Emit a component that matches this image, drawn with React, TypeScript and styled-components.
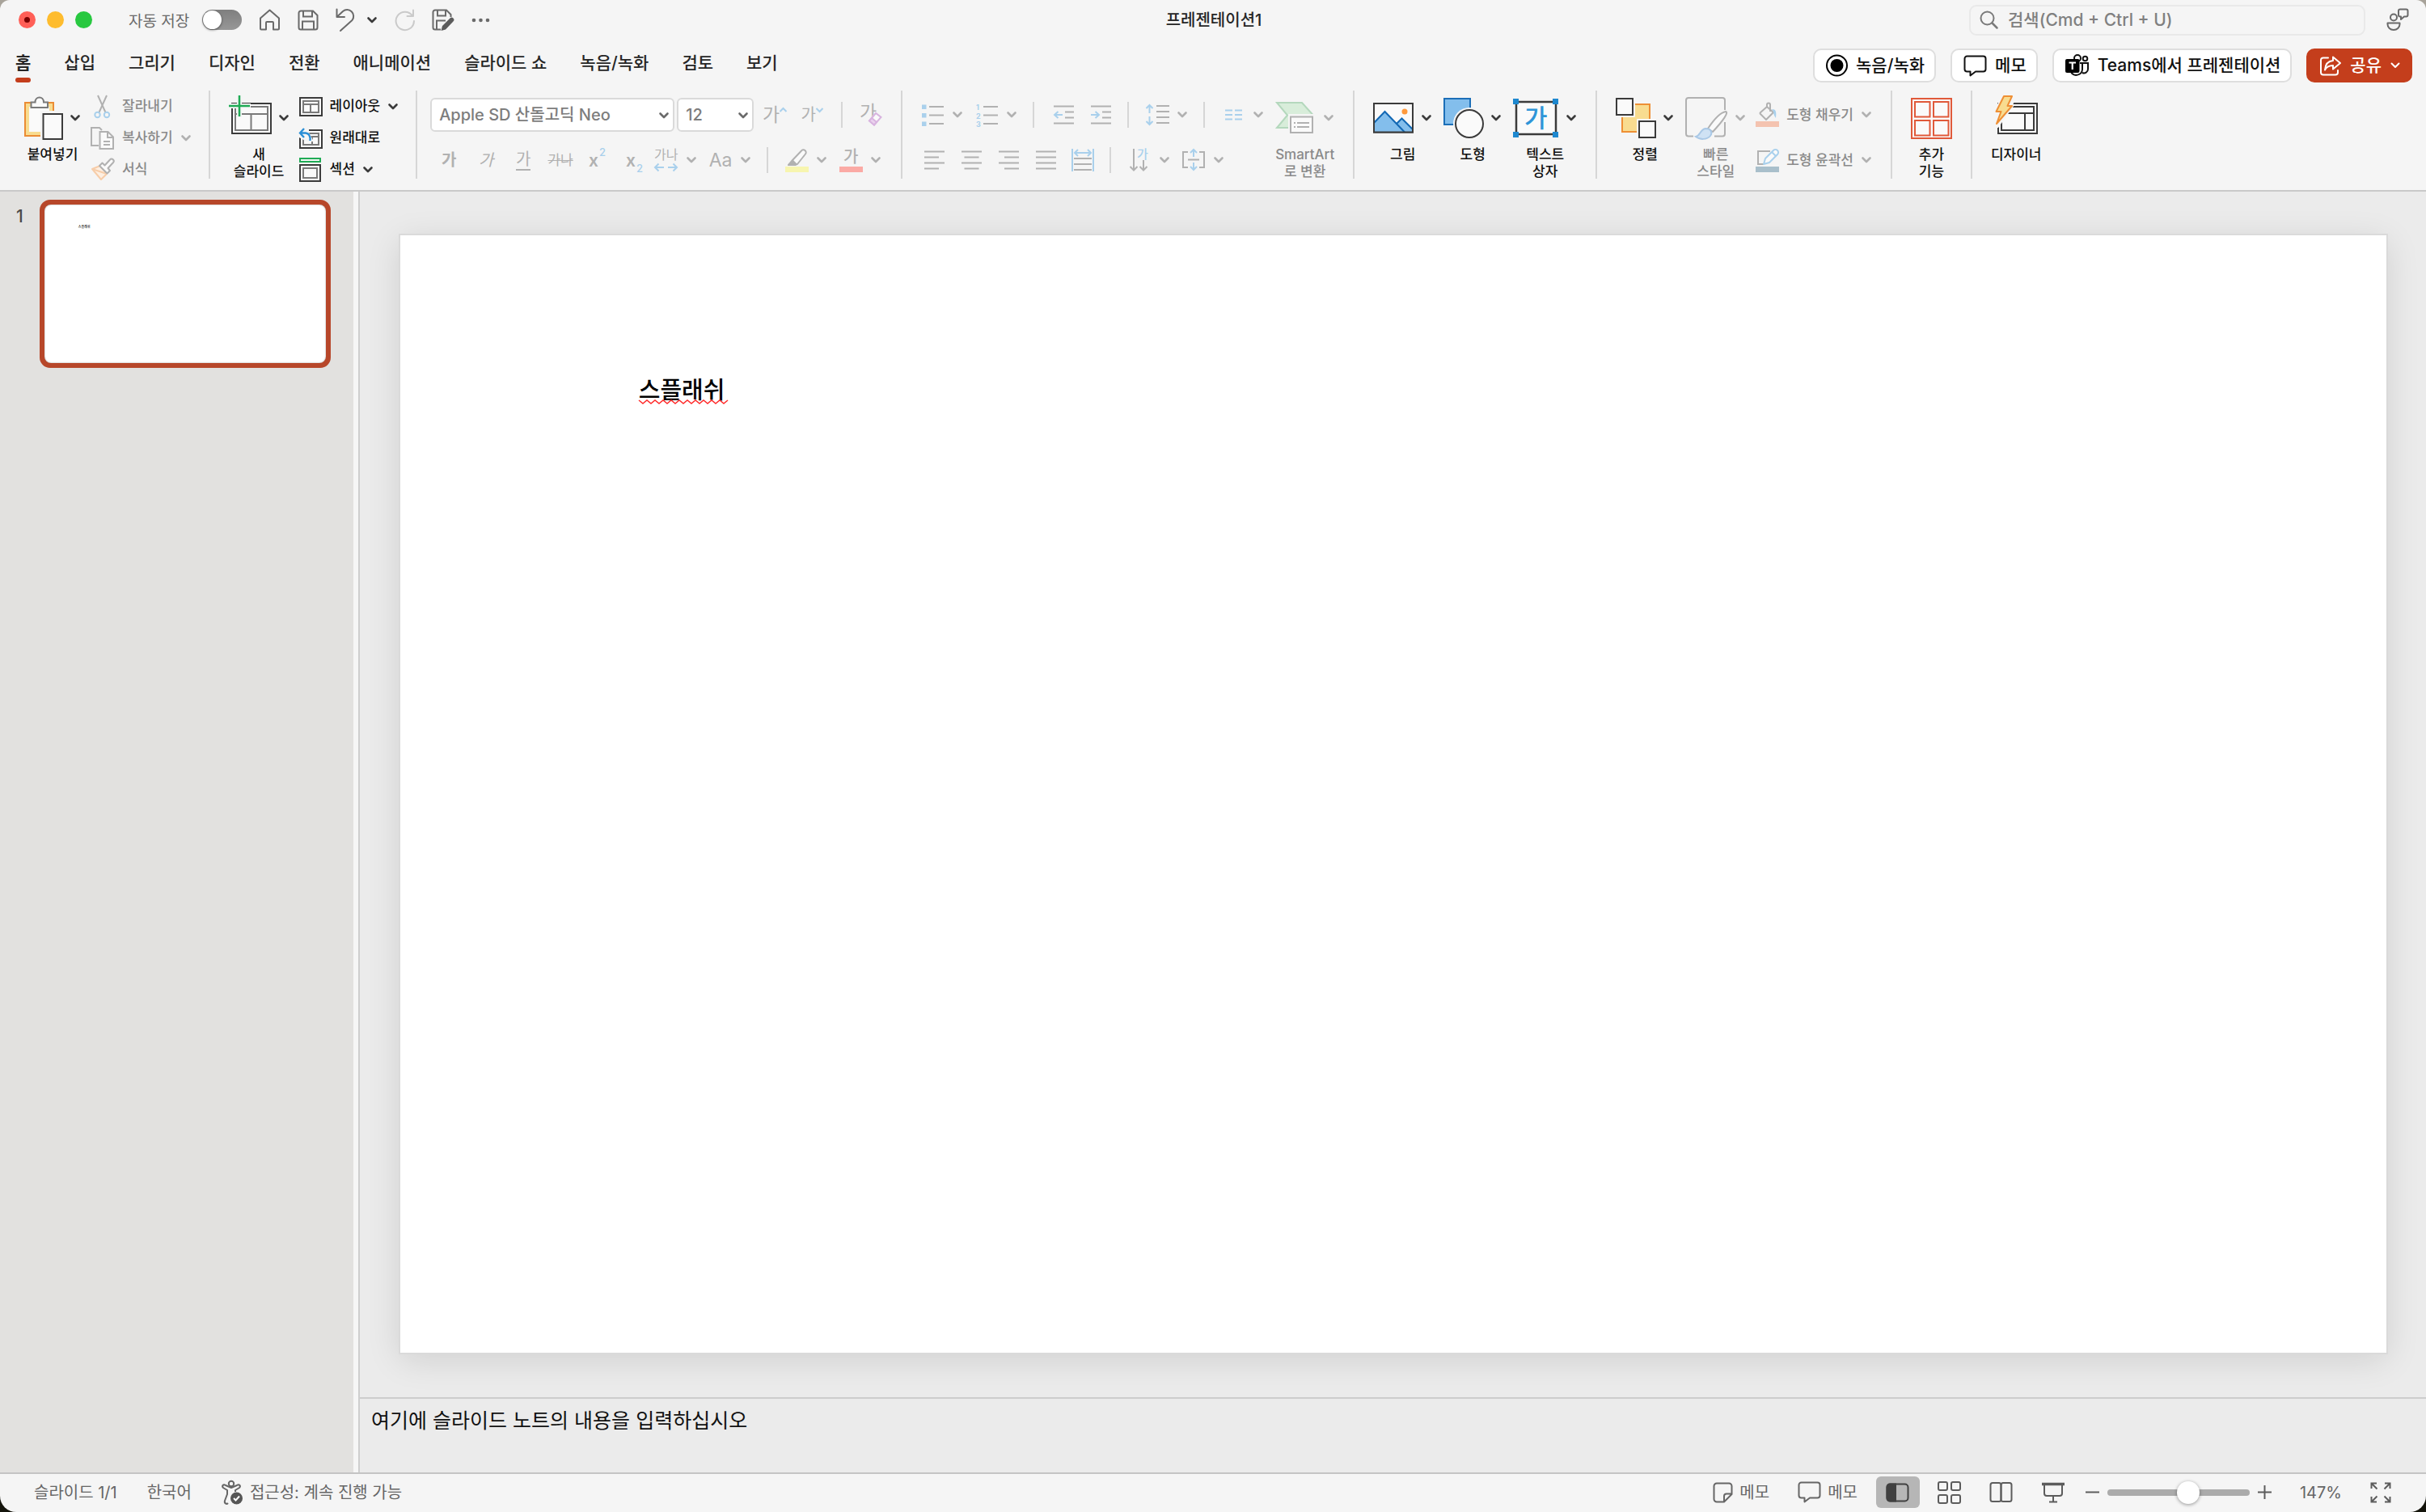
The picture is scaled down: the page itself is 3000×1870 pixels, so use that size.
import React from 'react';
import styled, { createGlobalStyle, css } from 'styled-components';

const ink = '#262626';
const line = '#3b3b3b';
const muted = '#8a8a8a';
const faded = '#b1b1b1';
const fadedBlue = '#a9d0ec';
const accent = '#c43e1c';
const chrome = '#f5f5f5';
const rule = '#c9c9c9';

const GlobalStyle = createGlobalStyle`
  * { box-sizing: border-box; }
  body {
    margin: 0;
    background: linear-gradient(#a8a39a 0 50%, #15150c 50% 100%);
    font-family: Inter, "Noto Sans CJK KR", sans-serif;
    color: ${ink};
  }
  button, input, select, textarea { font: inherit; color: inherit; }
  button { border: 0; padding: 0; background: none; white-space: nowrap; }
  svg { display: block; flex: none; overflow: visible; }
`;

const Window = styled.div`
  display: flex;
  flex-direction: column;
  height: 100vh;
  overflow: hidden;
  background: ${chrome};
  border-radius: 12px 12px 20px 20px;
`;

/* ---------- title bar ---------- */

const TitleBar = styled.header`
  display: grid;
  grid-template-columns: 1fr auto 1fr;
  align-items: center;
  height: 49px;
  padding: 0 21px 0 23px;
`;

const TitleSide = styled.div<{ $end?: boolean }>`
  display: flex;
  align-items: center;
  justify-content: ${p => (p.$end ? 'flex-end' : 'flex-start')};
  gap: ${p => (p.$end ? 26 : 21)}px;
`;

const Lights = styled.div`
  display: flex;
  gap: 14px;
`;

const Light = styled.button<{ $color: string; $dot?: boolean }>`
  display: grid;
  place-items: center;
  width: 21px;
  height: 21px;
  border-radius: 50%;
  background: ${p => p.$color};
  ${p => p.$dot && css`
    &::after {
      content: '';
      width: 7px;
      height: 7px;
      border-radius: 50%;
      background: #7a0000;
    }
  `}
`;

const AutoSave = styled.label`
  display: flex;
  align-items: center;
  gap: 16px;
  margin-left: 24px;
  font-size: 19px;
  color: #6a6a6a;
  white-space: nowrap;
`;

const Switch = styled.input`
  appearance: none;
  display: flex;
  align-items: center;
  width: 49px;
  height: 25px;
  margin: 0;
  padding: 1px;
  border-radius: 13px;
  background: linear-gradient(#7f7f7f, #979797);
  &::before {
    content: '';
    width: 23px;
    height: 23px;
    border-radius: 50%;
    background: #fff;
    box-shadow: 0 1px 3px rgba(0, 0, 0, 0.5);
  }
`;

const UndoGroup = styled.div`
  display: flex;
  align-items: center;
  gap: 14px;
`;

const DocTitle = styled.h1`
  margin: 0;
  font-size: 20px;
  line-height: 24px;
  font-weight: 500;
`;

const SearchBox = styled.label`
  display: flex;
  align-items: center;
  gap: 12px;
  width: 490px;
  height: 38px;
  padding: 0 11px;
  border: 2px solid #e9e9e9;
  border-radius: 9px;
`;

const SearchInput = styled.input`
  flex: 1;
  min-width: 0;
  padding: 0;
  border: 0;
  outline: 0;
  background: none;
  font-size: 21px;
  font-weight: 500;
  &::placeholder { color: #808080; opacity: 1; }
`;

/* ---------- tabs ---------- */

const TabBar = styled.div`
  display: flex;
  justify-content: space-between;
  height: 57px;
  padding: 11px 17px 0 19px;
`;

const Tabs = styled.nav`
  display: flex;
  gap: 41px;
`;

const Tab = styled.button<{ $active?: boolean }>`
  display: flex;
  flex-direction: column;
  gap: 3px;
  height: 42px;
  padding-top: 3px;
  font-size: 21px;
  line-height: 30px;
  font-weight: ${p => (p.$active ? 700 : 500)};
  ${p => p.$active && css`
    &::after {
      content: '';
      width: 100%;
      height: 6px;
      border-radius: 3px;
      background: ${accent};
    }
  `}
`;

const Actions = styled.div`
  display: flex;
  gap: 18px;
`;

const ActionButton = styled.button<{ $primary?: boolean }>`
  display: flex;
  align-items: center;
  gap: 10px;
  height: 42px;
  padding: 0 12px 0 14px;
  border: 2px solid ${p => (p.$primary ? accent : '#dedede')};
  border-radius: 10px;
  background: ${p => (p.$primary ? accent : '#fff')};
  color: ${p => (p.$primary ? '#fff' : '#111')};
  font-size: 21px;
  line-height: 24px;
  font-weight: 500;
`;

/* ---------- ribbon ---------- */

const Ribbon = styled.div`
  display: flex;
  align-items: flex-start;
  height: 131px;
  padding: 6px 23px 0;
  border-bottom: 2px solid ${rule};
`;

const GroupRule = styled.div`
  flex: none;
  width: 2px;
  height: 109px;
  margin: 0 16px;
  background: #d6d6d6;
`;

const TileButton = styled.button<{ $off?: boolean }>`
  display: flex;
  flex-direction: column;
  align-items: center;
  gap: 7px;
  padding: 6px 7px 0;
  font-size: 17px;
  line-height: 21px;
  font-weight: 500;
  color: ${p => (p.$off ? muted : '#111')};
`;

const TileArt = styled.span`
  display: flex;
  align-items: center;
  gap: 8px;
  height: 56px;
`;

const Stack = styled.div`
  display: flex;
  flex-direction: column;
  padding: 0 5px;
`;

const RowButton = styled.button<{ $off?: boolean }>`
  display: flex;
  align-items: center;
  gap: 9px;
  height: 39px;
  font-size: 17px;
  line-height: 21px;
  font-weight: 500;
  color: ${p => (p.$off ? muted : '#111')};
`;

const Tools = styled.div`
  display: flex;
  flex-direction: column;
  gap: 19px;
  padding: 9px 7px 0 0;
`;

const ToolRow = styled.div<{ $tall?: boolean; $inset?: boolean }>`
  display: flex;
  align-items: center;
  height: ${p => (p.$tall ? 42 : 32)}px;
  padding-left: ${p => (p.$inset ? 5 : 0)}px;
`;

const ToolRule = styled.div<{ $before?: number; $after?: number }>`
  width: 2px;
  height: 32px;
  margin: 0 ${p => p.$after ?? 19}px 0 ${p => p.$before ?? 19}px;
  background: #d6d6d6;
`;

const Tool = styled.button`
  display: flex;
  align-items: center;
  justify-content: center;
  width: 46px;
  height: 32px;
  color: ${faded};
`;

const SplitTool = styled.button`
  display: flex;
  align-items: center;
  gap: 8px;
  height: 32px;
  color: ${faded};
  & + & { margin-left: 13px; }
`;

const Slot = styled.span`
  display: flex;
  justify-content: center;
  width: 32px;
`;

const glyphSizes = { small: 17, base: 20, large: 23 };

const Glyph = styled.span<{
  $size?: keyof typeof glyphSizes;
  $bold?: boolean;
  $italic?: boolean;
  $under?: boolean;
  $strike?: boolean;
}>`
  font-size: ${p => glyphSizes[p.$size ?? 'base']}px;
  line-height: 24px;
  font-weight: ${p => (p.$bold ? 700 : 400)};
  font-style: ${p => (p.$italic ? 'italic' : 'normal')};
  border-bottom: ${p => (p.$under ? `2px solid ${faded}` : '0')};
  text-decoration: ${p => (p.$strike ? 'line-through' : 'none')};
`;

const SelectBox = styled.label<{ $grow?: boolean }>`
  position: relative;
  width: ${p => (p.$grow ? 302 : 95)}px;
  margin-right: 3px;
  svg { position: absolute; right: 6px; top: 18px; pointer-events: none; }
`;

const Select = styled.select`
  appearance: none;
  width: 100%;
  height: 42px;
  padding: 0 9px;
  border: 2px solid #dadada;
  border-radius: 6px;
  background: #fff;
  color: #7d7d7d;
  font-size: 20px;
  font-weight: 500;
`;

/* ---------- workspace ---------- */

const Workspace = styled.main`
  display: flex;
  flex: 1;
  min-height: 0;
`;

const Rail = styled.aside`
  flex: none;
  display: flex;
  align-items: flex-start;
  gap: 18px;
  width: 445px;
  padding: 10px 28px 0 20px;
  background: #e2e1df;
  border-right: 2px solid #cfcfcf;
  box-shadow: inset -6px 0 #f6f6f6;
`;

const SlideNumber = styled.span`
  width: 11px;
  padding-top: 6px;
  font-size: 21px;
  line-height: 30px;
  font-weight: 500;
  color: #4a4a4a;
`;

const Thumb = styled.button`
  display: block;
  width: 360px;
  padding: 0;
  border: 6px solid #b7472a;
  border-radius: 13px;
  background: #b7472a;
  text-align: left;
`;

const Sheet = styled.div<{ $mini?: boolean }>`
  width: 100%;
  aspect-ratio: 16 / 9;
  padding: 7% 12%;
  background: #fff;
  color: #000;
  font-size: ${p => (p.$mini ? 4 : 29)}px;
  line-height: ${p => (p.$mini ? 8 : 40)}px;
  font-weight: 500;
  ${p => p.$mini
    ? css`
        border-radius: 8px;
        box-shadow: inset 0 0 2px rgba(0, 0, 0, 0.4);
      `
    : css`
        box-shadow: 0 0 0 2px #dadada, 0 8px 40px rgba(0, 0, 0, 0.12);
      `}
`;

const Flagged = styled.span`
  position: relative;
  svg { position: absolute; left: 0; bottom: 0; }
`;

const Editor = styled.section`
  display: flex;
  flex: 1;
  flex-direction: column;
  min-width: 0;
  background: #ebebeb;
`;

const Stage = styled.div`
  flex: 1;
  min-height: 0;
  padding: 54px 49px 0 50px;
  overflow: hidden;
`;

const Notes = styled.textarea`
  display: block;
  height: 93px;
  padding: 12px 14px;
  border: 0;
  border-top: 2px solid #cdcdcd;
  outline: 0;
  resize: none;
  background: #ebebeb;
  font-size: 25px;
  line-height: 30px;
  &::placeholder { color: #111; opacity: 1; }
`;

/* ---------- status bar ---------- */

const StatusBar = styled.footer`
  display: flex;
  align-items: center;
  justify-content: space-between;
  height: 49px;
  padding: 0 43px 2px 42px;
  border-top: 2px solid #c4c4c4;
  font-size: 20px;
  line-height: 24px;
  color: #666;
`;

const StatusSide = styled.div<{ $gap: number }>`
  display: flex;
  align-items: center;
  gap: ${p => p.$gap}px;
`;

const StatusButton = styled.button`
  display: flex;
  align-items: center;
  gap: 8px;
`;

const Views = styled.div`
  display: flex;
  align-items: center;
  gap: 10px;
  margin: 0 -22px 0 -12px;
`;

const ViewButton = styled.button<{ $on?: boolean }>`
  display: grid;
  place-items: center;
  width: 54px;
  height: 39px;
  border-radius: 6px;
  background: ${p => (p.$on ? '#b6b6b6' : 'none')};
`;

const Zoom = styled.div`
  display: flex;
  align-items: center;
  gap: 10px;
`;

const Range = styled.input`
  appearance: none;
  width: 176px;
  height: 8px;
  margin: 0;
  border-radius: 4px;
  background: #ababab;
  &::-webkit-slider-thumb {
    appearance: none;
    width: 28px;
    height: 28px;
    border-radius: 50%;
    background: #fff;
    box-shadow: 0 1px 4px rgba(0, 0, 0, 0.4);
  }
`;

/* ---------- drawings ---------- */

const Chevron = ({ color = line, thin }: { color?: string; thin?: boolean }) => (
  <svg width="14" height="8" viewBox="0 0 14 8" fill="none" stroke={color} strokeWidth={thin ? 2 : 2.6}>
    <path d="M2.5 1.5 7 6 11.5 1.5" strokeLinecap="round" strokeLinejoin="round" />
  </svg>
);

type DrawProps = { w: number; h: number; color?: string; sw?: number; children: React.ReactNode };
const Draw = ({ w, h, color = line, sw = 2, children }: DrawProps) => (
  <svg width={w} height={h} viewBox={`0 0 ${w} ${h}`} fill="none" stroke={color} strokeWidth={sw}>
    {children}
  </svg>
);

const HomeIcon = () => (
  <Draw w={27} h={27} color="#6a6a6a">
    <path d="M2 11.5 13.5 1.5 25 11.5V24.5a1 1 0 0 1-1 1H18V17a1 1 0 0 0-1-1H10a1 1 0 0 0-1 1V25.5H3a1 1 0 0 1-1-1Z" strokeLinejoin="round" />
  </Draw>
);

const SaveIcon = () => (
  <Draw w={26} h={26} color="#6a6a6a">
    <path d="M4 1.5H19L24.5 7V22a2.5 2.5 0 0 1-2.5 2.5H4A2.5 2.5 0 0 1 1.5 22V4A2.5 2.5 0 0 1 4 1.5Z" />
    <path d="M7 1.5V8.5H18V1.5M6 24V14.5H20V24" />
  </Draw>
);

const UndoIcon = () => (
  <Draw w={24} h={29} color="#6a6a6a">
    <path d="M1.5 1.5V11H11M1.5 11 9 4a8 8 0 0 1 11.5 11L6 28" strokeLinecap="round" strokeLinejoin="round" />
  </Draw>
);

const RedoIcon = () => (
  <Draw w={25} h={27} color="#cacaca">
    <path d="M22 8.5A11.2 11.2 0 1 0 24 15M23 1.5V9H15.5" strokeLinecap="round" strokeLinejoin="round" />
  </Draw>
);

const SaveEditIcon = () => (
  <Draw w={28} h={28} color="#6a6a6a">
    <path d="M11 25.5H4A2.5 2.5 0 0 1 1.5 23V4A2.5 2.5 0 0 1 4 1.5H18L23.5 7V10" />
    <path d="M7 1.5V8.5H17V1.5M6 25V14.5H17" />
    <path d="M11.5 27 13 21 22.5 11.5a2.6 2.6 0 0 1 4 4L17 25.5Z" fill="#5c5c5c" stroke="none" />
  </Draw>
);

const MoreIcon = () => (
  <Draw w={23} h={6}>
    {[3, 11.5, 20].map(x => <circle key={x} cx={x} cy="3" r="2.3" fill="#6a6a6a" stroke="none" />)}
  </Draw>
);

const SearchIcon = () => (
  <Draw w={23} h={23} color="#7a7a7a">
    <circle cx="9.5" cy="9.5" r="8" />
    <path d="M15.5 15.5 21.5 21.5" strokeWidth="2.5" strokeLinecap="round" />
  </Draw>
);

const PeopleIcon = () => (
  <Draw w={28} h={29} color="#6a6a6a">
    <circle cx="9" cy="11.5" r="4" />
    <path d="M1.5 18.5H16.5V20a7.5 7 0 0 1-15 0Z" strokeLinejoin="round" />
    <path d="M17 1.5H24.5A2 2 0 0 1 26.5 3.5V8.5A2 2 0 0 1 24.5 10.5H22L18 14V10.5H17A2 2 0 0 1 15 8.5V3.5A2 2 0 0 1 17 1.5Z" strokeLinejoin="round" />
  </Draw>
);

const RecordIcon = () => (
  <Draw w={27} h={28} color="#000">
    <circle cx="13.5" cy="14" r="12.5" />
    <circle cx="13.5" cy="14" r="8" fill="#000" stroke="none" />
  </Draw>
);

const BubbleIcon = ({ color = '#111' }: { color?: string }) => (
  <Draw w={29} h={27} color={color}>
    <path d="M4.5 1.5H24.5A3 3 0 0 1 27.5 4.5V17.5A3 3 0 0 1 24.5 20.5H15L8.5 25.5V20.5H4.5A3 3 0 0 1 1.5 17.5V4.5A3 3 0 0 1 4.5 1.5Z" strokeLinejoin="round" />
  </Draw>
);

const TeamsIcon = () => (
  <Draw w={30} h={28} color="#111">
    <circle cx="15" cy="5" r="4" />
    <circle cx="24.5" cy="5.5" r="2.8" />
    <path d="M18 11H28V18.5a5 5 0 0 1-7 4.5M21 11V19a7.5 7.5 0 0 1-14 3" />
    <rect x="0" y="6" width="17.5" height="17" rx="2" fill="#000" stroke="none" />
    <path d="M4.5 10.5H13M8.75 10.5V19" stroke="#fff" strokeWidth="2.2" />
  </Draw>
);

const ShareIcon = () => (
  <Draw w={28} h={25} color="#fff">
    <path d="M11 2.5H5A3 3 0 0 0 2 5.5V20.5A3 3 0 0 0 5 23.5H20A3 3 0 0 0 23 20.5V18" strokeLinecap="round" />
    <path d="M17 1.5 26 9 17 16.5V12C12 12 9 13.5 7 17.5 7.5 10.5 11 6.5 17 6Z" strokeLinejoin="round" />
  </Draw>
);

const PasteIcon = () => (
  <Draw w={48} h={54}>
    <rect x="3.5" y="10.5" width="30" height="36" fill="#fafafa" stroke="#f8dc90" strokeWidth="5" />
    <rect x="1" y="8" width="35" height="41" stroke="#eb8c34" />
    <path d="M8.5 14V7.5H13.5C13.5-.5 24-.5 24 7.5H29V14Z" fill="#fafafa" stroke="#7a7a7a" />
    <rect x="20" y="18" width="28" height="36" fill={chrome} stroke="none" />
    <rect x="23.5" y="22" width="23.5" height="31" fill="#fafafa" />
  </Draw>
);

const CutIcon = () => (
  <Draw w={30} h={30} color={faded}>
    <path d="M9 1 18.5 22M20 1 10.5 22" />
    <circle cx="8.5" cy="25" r="3.2" stroke={fadedBlue} />
    <circle cx="20" cy="25" r="3.2" stroke={fadedBlue} />
  </Draw>
);

const CopyIcon = () => (
  <Draw w={30} h={28} color={faded}>
    <path d="M10 23H1V1H11L14 4" />
    <path d="M11.5 6H21.5L28 12.5V27H11.5Z" fill="#fafafa" />
    <path d="M21 6V13H28M16 18H24M16 22H24" />
  </Draw>
);

const BrushIcon = () => (
  <Draw w={30} h={28} color="#f7cda9">
    <path d="M2 13 12 9 20 19 13 26Z" fill="#fdefe2" strokeLinejoin="round" />
    <path d="M2 13 20 19" />
    <path d="M11 9 14.5 5.5 17.5 8.5 24 1.5a2 2 0 0 1 4 3.5L21.5 12 24 15 20.5 18.5Z" fill="#fafafa" stroke={faded} strokeLinejoin="round" />
  </Draw>
);

const NewSlideIcon = () => (
  <Draw w={53} h={56}>
    <rect x="4" y="10" width="48" height="37" fill="#fafafa" />
    <rect x="8" y="14" width="40" height="29" stroke="#7a7a7a" />
    <path d="M8 23H48M27.5 23V43" stroke="#7a7a7a" />
    <path d="M0 13H27M13 -1V27" stroke={chrome} strokeWidth="6" />
    <path d="M0 13H26M13 0V26" stroke="#1fab55" strokeWidth="2.5" />
  </Draw>
);

const LayoutIcon = () => (
  <Draw w={29} h={24}>
    <rect x="1" y="1" width="27" height="22" fill="#fafafa" />
    <path d="M5 5H24V19H5ZM5 9H24M14 9V19" stroke="#7a7a7a" />
  </Draw>
);

const ResetIcon = () => (
  <Draw w={29} h={26}>
    <rect x="1" y="3" width="27" height="22" fill="#fafafa" />
    <path d="M5 7H24V21H5ZM14 11H24M16 11V21" stroke="#7a7a7a" />
    <path d="M0 0H12V6L18 17H9L0 12Z" fill={chrome} stroke="none" />
    <path d="M6 1 1 6.5 6 12M1 6.5H8C12 7 14 10 13.5 16" stroke="#2b8fd6" strokeWidth="2.4" />
  </Draw>
);

const SectionIcon = () => (
  <Draw w={29} h={30}>
    <rect x="1" y="1" width="25" height="4" stroke="#1fab55" />
    <rect x="1" y="9" width="25" height="20" fill="#fafafa" />
    <rect x="5" y="13" width="17" height="12" stroke="#7a7a7a" />
  </Draw>
);

const StepMark = ({ up }: { up?: boolean }) => (
  <Draw w={9} h={20} color={fadedBlue}>
    <path d={up ? 'M.5 6 4.5 2 8.5 6' : 'M.5 2 4.5 6 8.5 2'} />
  </Draw>
);

const EraserIcon = () => (
  <Draw w={28} h={30} color={faded}>
    <text x="0" y="20" fontSize="23" fill={faded} stroke="none">가</text>
    <path d="M11 22 19.5 12 28 17 19 28H15Z" fill={chrome} stroke="none" />
    <path d="M12 22.5 20 13 26.5 18 18 27.5Z" fill="#fafafa" stroke="#d8b4df" />
    <path d="M12 22.5 15 19 21 24 18 27.5Z" fill="#ead2ee" stroke="#d8b4df" />
  </Draw>
);

const SpacingIcon = () => (
  <Draw w={30} h={30} color={fadedBlue}>
    <text x="0" y="14" fontSize="16" fill={faded} stroke="none">가나</text>
    <path d="M1 24H12M5.5 19.5 1 24 5.5 28.5M17 24H28M23.5 19.5 28 24 23.5 28.5" />
  </Draw>
);

const ScriptIcon = ({ sup }: { sup?: boolean }) => (
  <Draw w={22} h={30}>
    <text x="0" y="23" fontSize="21" fontWeight="600" fill={faded} stroke="none">x</text>
    <text x="13" y={sup ? 10 : 30} fontSize="13" fontWeight="500" fill={fadedBlue} stroke="none">2</text>
  </Draw>
);

const HighlightIcon = () => (
  <Draw w={29} h={29} color={faded}>
    <path d="M4 20 10 13 20 2.5a3 3 0 0 1 5 4L15 19 11 20Z" fill="#fafafa" strokeLinejoin="round" />
    <path d="M3 21 9 13 15 19 13 21Z" fill={faded} stroke="none" />
    <rect x="0" y="22" width="29" height="7" fill="#f7f5af" stroke="none" />
  </Draw>
);

const FontColorIcon = () => (
  <Draw w={29} h={29}>
    <text x="5" y="17" fontSize="20" fontWeight="500" fill={faded} stroke="none">가</text>
    <rect x="0" y="22" width="29" height="7" fill="#fbaaa5" stroke="none" />
  </Draw>
);

const BulletsIcon = () => (
  <Draw w={27} h={27} color={faded}>
    <path d="M9 3H27M9 13.5H27M9 24H27" />
    {[0.5, 11, 21.5].map(y => <rect key={y} x="0" y={y} width="5.5" height="5.5" fill={fadedBlue} stroke="none" />)}
  </Draw>
);

const NumbersIcon = () => (
  <Draw w={27} h={27} color={faded}>
    <path d="M9 3H27M9 13.5H27M9 24H27" />
    {['1', '2', '3'].map((n, i) => (
      <text key={n} x="0" y={7 + i * 10.5} fontSize="9" fontWeight="700" fill={fadedBlue} stroke="none">{n}</text>
    ))}
  </Draw>
);

const IndentIcon = ({ out }: { out?: boolean }) => (
  <Draw w={25} h={26} color={faded}>
    <path d="M0 2.5H25M14 9.5H25M14 16.5H25M0 23.5H25" />
    <path d={out ? 'M1 13H11M5.5 9 1 13 5.5 17' : 'M0 13H10M5.5 9 10 13 5.5 17'} stroke={fadedBlue} />
  </Draw>
);

const LineSpacingIcon = () => (
  <Draw w={29} h={28} color={faded}>
    <path d="M13 3H29M13 10H29M13 17H29M13 24H29" />
    <path d="M4.5 12V2M.5 6 4.5 2 8.5 6M4.5 16V26M.5 22 4.5 26 8.5 22" stroke={fadedBlue} />
  </Draw>
);

const ColumnsIcon = () => (
  <Draw w={21} h={14} color={fadedBlue}>
    <path d="M0 1.5H9M0 7H9M0 12.5H9M12 1.5H21M12 7H21M12 12.5H21" />
  </Draw>
);

const AlignIcon = ({ kind }: { kind: 'left' | 'center' | 'right' | 'full' }) => {
  const [from, to] = { left: [0, 18], center: [3.5, 21.5], right: [7, 25], full: [0, 25] }[kind];
  return (
    <Draw w={25} h={24} color={faded}>
      <path d={`M0 1.5H25M${from} 8.5H${to}M0 15.5H25M${from} 22.5H${to}`} />
    </Draw>
  );
};

const DistributeIcon = () => (
  <Draw w={28} h={28} color={faded}>
    <path d="M3 12H25M3 19H25M3 26H25" />
    <path d="M1 0V28M27 0V28M4 5H24M8 1 4 5 8 9M20 1 24 5 20 9" stroke={fadedBlue} />
  </Draw>
);

const DirectionIcon = () => (
  <Draw w={24} h={28} color={faded}>
    <path d="M5 0V26M.5 22 5 26.5 9.5 22M17 14V26M12.5 22 17 26.5 21.5 22" />
    <text x="9" y="12" fontSize="15" fontWeight="500" fill={fadedBlue} stroke="none">가</text>
  </Draw>
);

const AlignTextIcon = () => (
  <Draw w={28} h={28} color={faded}>
    <path d="M7 4H1V23H7M21 4H27V23H21M7 13.5H21" />
    <path d="M14 10V1.5M10 5 14 1 18 5M14 17V25.5M10 22 14 26 18 22" stroke={fadedBlue} />
  </Draw>
);

const SmartArtIcon = () => (
  <Draw w={51} h={40} color="#b4d8bd">
    <path d="M2 1H33L47 16.5 33 32H2L15 16.5Z" fill="#d8edda" />
    <path d="M16 15H51V40H16Z" fill={chrome} stroke="none" />
    <path d="M19 18.5H46V38H19Z" fill="#fafafa" stroke={faded} />
    <path d="M23 26H25M27 26H42M23 31H25M27 31H42" stroke={faded} />
  </Draw>
);

const PictureIcon = () => (
  <Draw w={51} h={38}>
    <rect x="1" y="1" width="48" height="35.5" fill="#fafafa" />
    <path d="M1 25 14.5 11 39 36H1ZM29 26 35.5 19.5 49 33V36H39Z" fill="#83beec" stroke="none" />
    <path d="M1 25 14.5 11 39 36.5M29 26 35.5 19.5 49 33" stroke="#1268b4" />
    <circle cx="39" cy="11" r="3.5" fill="#ff9a3c" stroke="none" />
    <rect x="1" y="1" width="48" height="35.5" />
  </Draw>
);

const ShapesIcon = () => (
  <Draw w={50} h={50}>
    <rect x="1" y="1" width="32" height="32" fill="#83beec" stroke="#1c6fb8" />
    <circle cx="32" cy="32" r="20" fill={chrome} stroke="none" />
    <circle cx="32" cy="32" r="17" fill="#fafafa" />
  </Draw>
);

const TextBoxIcon = () => (
  <Draw w={57} h={48}>
    <rect x="4" y="4" width="49" height="40" fill="#fafafa" strokeWidth="2.5" />
    {[0, 49].map(x => [0, 41].map(y => (
      <rect key={`${x}-${y}`} x={x} y={y} width="7" height="7" fill="#1e88cf" stroke="none" />
    )))}
    <text x="14" y="35" fontSize="31" fill="#2f95d8" stroke="none">가</text>
  </Draw>
);

const ArrangeIcon = () => (
  <Draw w={50} h={50}>
    <rect x="8" y="8" width="34" height="34" fill="#f8dc90" stroke="#ee8f35" />
    <path d="M0 0H24V24H0ZM26 26H50V50H26Z" fill={chrome} stroke="none" />
    <rect x="1" y="1" width="20" height="20" fill="#fafafa" />
    <rect x="29" y="29" width="20" height="20" fill="#fafafa" />
  </Draw>
);

const StylesIcon = () => (
  <Draw w={53} h={54} color={faded}>
    <path d="M10 49.5H4A3 3 0 0 1 1 46.5V5A3 3 0 0 1 4 2H46A3 3 0 0 1 49 5V17M49 32V46.5A3 3 0 0 1 46 49.5H36" />
    <path d="M28 40C36 28 44 20 50 19 54 20 47 30 34 44Z" fill="#fafafa" strokeLinejoin="round" />
    <path d="M13 50C19 49 18 41 25 40 32 40 34 45 31 49 27 54 18 54 13 50Z" fill="#cfe2f4" stroke="#a9c8e6" />
  </Draw>
);

const FillIcon = () => (
  <Draw w={29} h={29} color={faded}>
    <path d="M5 12 14 4V1.5a2 2 0 0 1 4 0V10M14 4 22 11 13 20 5 12" strokeLinejoin="round" />
    <path d="M20 7C25 7 26 10 25 18 23 15 22 13 22 10Z" fill={fadedBlue} stroke="none" />
    <rect x="0" y="22" width="29" height="7" fill="#f4c3b0" stroke="none" />
  </Draw>
);

const OutlineIcon = () => (
  <Draw w={29} h={29} color={faded}>
    <path d="M18 3H3V19H10" />
    <path d="M10 19 12 12 22 2a3 3 0 0 1 5 5L17 17Z" fill="#fafafa" stroke={fadedBlue} strokeLinejoin="round" />
    <path d="M20 4 25 9" stroke={fadedBlue} />
    <rect x="0" y="22" width="29" height="7" fill="#a9bfcb" stroke="none" />
  </Draw>
);

const AddInsIcon = () => (
  <Draw w={51} h={51} color="#e0593a">
    <rect x="1" y="1" width="49" height="49" fill="#fafafa" />
    {[5, 28].map(x => [5, 28].map(y => <rect key={`${x}-${y}`} x={x} y={y} width="18.5" height="18.5" />))}
  </Draw>
);

const DesignerIcon = () => (
  <Draw w={53} h={56}>
    <rect x="4" y="10" width="48" height="37" fill="#fafafa" />
    <path d="M8 14H48V43H8ZM15 22H48M37 22V43" />
    <path d="M10 -2H28L22 12H24L4 40H-3V22Z" fill={chrome} stroke="none" />
    <path d="M11 1H21L15.5 13H21L2 35 7.5 20H1.5Z" fill="#f8dc90" stroke="#ee8f35" strokeLinejoin="round" />
  </Draw>
);

const AccessIcon = () => (
  <Draw w={27} h={30} color="#666">
    <circle cx="12" cy="4" r="3.2" />
    <path d="M8 28C6 30 3 28 4 25L7 17V12L2 9C0 7 2 4 5 6L12 9 19 6C22 4 24 7 22 9L17 12V14" strokeLinejoin="round" />
    <circle cx="18.5" cy="22" r="7.5" fill="#555" stroke="none" />
    <path d="M15 22 17.5 24.5 22 19.5" stroke="#fff" />
  </Draw>
);

const NoteIcon = () => (
  <Draw w={25} h={26} color="#666">
    <path d="M5 1.5H20A3.5 3.5 0 0 1 23.5 5V15L14 24.5H5A3.5 3.5 0 0 1 1.5 21V5A3.5 3.5 0 0 1 5 1.5ZM23.5 14.5H17A3 3 0 0 0 14 17.5V24" strokeLinejoin="round" />
  </Draw>
);

const NormalViewIcon = () => (
  <Draw w={29} h={24} color="#404040">
    <rect x="1.5" y="1.5" width="26" height="21" rx="4" />
    <path d="M5 1.5H12V22.5H5A3.5 3.5 0 0 1 1.5 19V5A3.5 3.5 0 0 1 5 1.5Z" fill="#404040" />
  </Draw>
);

const SorterIcon = () => (
  <Draw w={29} h={28} color="#5c5c5c">
    {[1, 17].map(x => [1, 17].map(y => <rect key={`${x}-${y}`} x={x} y={y} width="11" height="10" rx="2" />))}
  </Draw>
);

const ReadingIcon = () => (
  <Draw w={29} h={25} color="#5c5c5c">
    <rect x="1.5" y="1" width="13" height="23" rx="2.5" />
    <rect x="14.5" y="1" width="13" height="23" rx="2.5" />
  </Draw>
);

const ShowIcon = () => (
  <Draw w={28} h={26} color="#5c5c5c">
    <path d="M0 2.5H28" strokeWidth="3.5" />
    <path d="M3 3V14A3 3 0 0 0 6 17H22A3 3 0 0 0 25 14V3M14 17V24M9 24.5H19" />
  </Draw>
);

const FitIcon = () => (
  <Draw w={26} h={26} color="#5c5c5c">
    <path d="M1.5 8V1.5H8M2 2 8.5 8.5M18 1.5H24.5V8M24 2 17.5 8.5M1.5 18V24.5H8M2 24 8.5 17.5M24.5 18V24.5H18M24 24 17.5 17.5" />
  </Draw>
);

const StepIcon = ({ plus }: { plus?: boolean }) => (
  <Draw w={17} h={17} color="#5c5c5c">
    <path d={plus ? 'M0 8.5H17M8.5 0V17' : 'M0 8.5H17'} />
  </Draw>
);

const Squiggle = ({ width }: { width: number }) => {
  const steps = Math.floor(width / 5);
  const points = Array.from({ length: steps + 1 }, (_, i) => `${i * 5},${i % 2 ? 5 : 1}`).join(' ');
  return (
    <Draw w={width} h={6} color="#ff2a2a" sw={1.5}>
      <polyline points={points} />
    </Draw>
  );
};

/* ---------- composed parts ---------- */

type TileProps = { icon: React.ReactNode; lines: string[]; off?: boolean; menu?: boolean };
const Tile = ({ icon, lines, off, menu = true }: TileProps) => (
  <TileButton $off={off}>
    <TileArt>
      {icon}
      {menu && <Chevron color={off ? faded : line} />}
    </TileArt>
    <span>{lines.map((text, i) => <React.Fragment key={text}>{i > 0 && <br />}{text}</React.Fragment>)}</span>
  </TileButton>
);

type RowProps = { icon: React.ReactNode; label: string; off?: boolean; menu?: boolean };
const Row = ({ icon, label, off, menu }: RowProps) => (
  <RowButton $off={off}>
    {icon}
    {label}
    {menu && <Chevron color={off ? faded : line} />}
  </RowButton>
);

const Split = ({ label, children }: { label: string; children: React.ReactNode }) => (
  <SplitTool aria-label={label}>
    <Slot>{children}</Slot>
    <Chevron color={faded} />
  </SplitTool>
);

const tabs = ['홈', '삽입', '그리기', '디자인', '전환', '애니메이션', '슬라이드 쇼', '녹음/녹화', '검토', '보기'];

export default function App() {
  return (
    <>
      <GlobalStyle />
      <Window lang="ko">
        <TitleBar>
          <TitleSide>
            <Lights>
              <Light $color="#ff5f57" $dot aria-label="닫기" />
              <Light $color="#febc2e" aria-label="최소화" />
              <Light $color="#28c840" aria-label="확대" />
            </Lights>
            <AutoSave>
              자동 저장
              <Switch type="checkbox" role="switch" />
            </AutoSave>
            <button aria-label="홈으로"><HomeIcon /></button>
            <button aria-label="저장"><SaveIcon /></button>
            <UndoGroup>
              <button aria-label="실행 취소"><UndoIcon /></button>
              <button aria-label="실행 취소 목록"><Chevron /></button>
            </UndoGroup>
            <button aria-label="다시 실행"><RedoIcon /></button>
            <button aria-label="다른 이름으로 저장"><SaveEditIcon /></button>
            <button aria-label="더 보기"><MoreIcon /></button>
          </TitleSide>
          <DocTitle>프레젠테이션1</DocTitle>
          <TitleSide $end>
            <SearchBox>
              <SearchIcon />
              <SearchInput type="text" aria-label="검색" placeholder="검색(Cmd + Ctrl + U)" />
            </SearchBox>
            <button aria-label="공동 작업"><PeopleIcon /></button>
          </TitleSide>
        </TitleBar>

        <TabBar>
          <Tabs>
            {tabs.map((name, i) => <Tab key={name} $active={i === 0}>{name}</Tab>)}
          </Tabs>
          <Actions>
            <ActionButton><RecordIcon />녹음/녹화</ActionButton>
            <ActionButton><BubbleIcon />메모</ActionButton>
            <ActionButton><TeamsIcon />Teams에서 프레젠테이션</ActionButton>
            <ActionButton $primary><ShareIcon />공유<Chevron color="#fff" thin /></ActionButton>
          </Actions>
        </TabBar>

        <Ribbon>
          <Tile icon={<PasteIcon />} lines={['붙여넣기']} />
          <Stack>
            <Row icon={<CutIcon />} label="잘라내기" off />
            <Row icon={<CopyIcon />} label="복사하기" off menu />
            <Row icon={<BrushIcon />} label="서식" off />
          </Stack>
          <GroupRule />

          <Tile icon={<NewSlideIcon />} lines={['새', '슬라이드']} />
          <Stack>
            <Row icon={<LayoutIcon />} label="레이아웃" menu />
            <Row icon={<ResetIcon />} label="원래대로" />
            <Row icon={<SectionIcon />} label="섹션" menu />
          </Stack>
          <GroupRule />

          <Tools>
            <ToolRow $tall>
              <SelectBox $grow>
                <Select aria-label="글꼴"><option>Apple SD 산돌고딕 Neo</option></Select>
                <Chevron color="#6a6a6a" />
              </SelectBox>
              <SelectBox>
                <Select aria-label="글꼴 크기"><option>12</option></Select>
                <Chevron color="#6a6a6a" />
              </SelectBox>
              <Tool aria-label="글꼴 크게"><Glyph $size="large">가</Glyph><StepMark up /></Tool>
              <Tool aria-label="글꼴 작게"><Glyph>가</Glyph><StepMark /></Tool>
              <ToolRule $before={13} $after={21} />
              <button aria-label="서식 지우기"><EraserIcon /></button>
            </ToolRow>
            <ToolRow>
              <Tool><Glyph $bold>가</Glyph></Tool>
              <Tool><Glyph $italic>가</Glyph></Tool>
              <Tool><Glyph $under>가</Glyph></Tool>
              <Tool><Glyph $strike $size="small">가나</Glyph></Tool>
              <Tool aria-label="위 첨자"><ScriptIcon sup /></Tool>
              <Tool aria-label="아래 첨자"><ScriptIcon /></Tool>
              <Split label="문자 간격"><SpacingIcon /></Split>
              <Split label="대/소문자"><Glyph $size="large">Aa</Glyph></Split>
              <ToolRule />
              <Split label="강조 색"><HighlightIcon /></Split>
              <Split label="글꼴 색"><FontColorIcon /></Split>
            </ToolRow>
          </Tools>
          <GroupRule />

          <Tools>
            <ToolRow $tall $inset>
              <Split label="글머리 기호"><BulletsIcon /></Split>
              <Split label="번호 매기기"><NumbersIcon /></Split>
              <ToolRule $after={13} />
              <Tool aria-label="내어쓰기"><IndentIcon out /></Tool>
              <Tool aria-label="들여쓰기"><IndentIcon /></Tool>
              <ToolRule $before={10} />
              <Split label="줄 간격"><LineSpacingIcon /></Split>
              <ToolRule />
              <Split label="열"><ColumnsIcon /></Split>
            </ToolRow>
            <ToolRow>
              <Tool aria-label="왼쪽 맞춤"><AlignIcon kind="left" /></Tool>
              <Tool aria-label="가운데 맞춤"><AlignIcon kind="center" /></Tool>
              <Tool aria-label="오른쪽 맞춤"><AlignIcon kind="right" /></Tool>
              <Tool aria-label="양쪽 맞춤"><AlignIcon kind="full" /></Tool>
              <Tool aria-label="균등 분할"><DistributeIcon /></Tool>
              <ToolRule $before={10} />
              <Split label="텍스트 방향"><DirectionIcon /></Split>
              <Split label="텍스트 맞춤"><AlignTextIcon /></Split>
            </ToolRow>
          </Tools>
          <Tile icon={<SmartArtIcon />} lines={['SmartArt', '로 변환']} off />
          <GroupRule />

          <Tile icon={<PictureIcon />} lines={['그림']} />
          <Tile icon={<ShapesIcon />} lines={['도형']} />
          <Tile icon={<TextBoxIcon />} lines={['텍스트', '상자']} />
          <GroupRule />

          <Tile icon={<ArrangeIcon />} lines={['정렬']} />
          <Tile icon={<StylesIcon />} lines={['빠른', '스타일']} off />
          <Tools>
            <ToolRow $tall $inset><Row icon={<FillIcon />} label="도형 채우기" off menu /></ToolRow>
            <ToolRow $inset><Row icon={<OutlineIcon />} label="도형 윤곽선" off menu /></ToolRow>
          </Tools>
          <GroupRule />

          <Tile icon={<AddInsIcon />} lines={['추가', '기능']} menu={false} />
          <GroupRule />
          <Tile icon={<DesignerIcon />} lines={['디자이너']} menu={false} />
        </Ribbon>

        <Workspace>
          <Rail>
            <SlideNumber>1</SlideNumber>
            <Thumb aria-label="슬라이드 1">
              <Sheet $mini>스플래쉬</Sheet>
            </Thumb>
          </Rail>
          <Editor>
            <Stage>
              <Sheet>
                <Flagged>스플래쉬<Squiggle width={112} /></Flagged>
              </Sheet>
            </Stage>
            <Notes aria-label="슬라이드 노트" placeholder="여기에 슬라이드 노트의 내용을 입력하십시오" />
          </Editor>
        </Workspace>

        <StatusBar>
          <StatusSide $gap={37}>
            <span>슬라이드 1/1</span>
            <button>한국어</button>
            <StatusButton><AccessIcon />접근성: 계속 진행 가능</StatusButton>
          </StatusSide>
          <StatusSide $gap={35}>
            <StatusButton><NoteIcon />메모</StatusButton>
            <StatusButton><BubbleIcon color="#666" />메모</StatusButton>
            <Views>
              <ViewButton $on aria-label="기본"><NormalViewIcon /></ViewButton>
              <ViewButton aria-label="여러 슬라이드"><SorterIcon /></ViewButton>
              <ViewButton aria-label="읽기용 보기"><ReadingIcon /></ViewButton>
              <ViewButton aria-label="슬라이드 쇼 보기"><ShowIcon /></ViewButton>
            </Views>
            <Zoom>
              <button aria-label="축소"><StepIcon /></button>
              <Range type="range" min={0} max={100} defaultValue={58} aria-label="확대/축소" />
              <button aria-label="확대"><StepIcon plus /></button>
            </Zoom>
            <button>147%</button>
            <button aria-label="창에 맞춤"><FitIcon /></button>
          </StatusSide>
        </StatusBar>
      </Window>
    </>
  );
}
